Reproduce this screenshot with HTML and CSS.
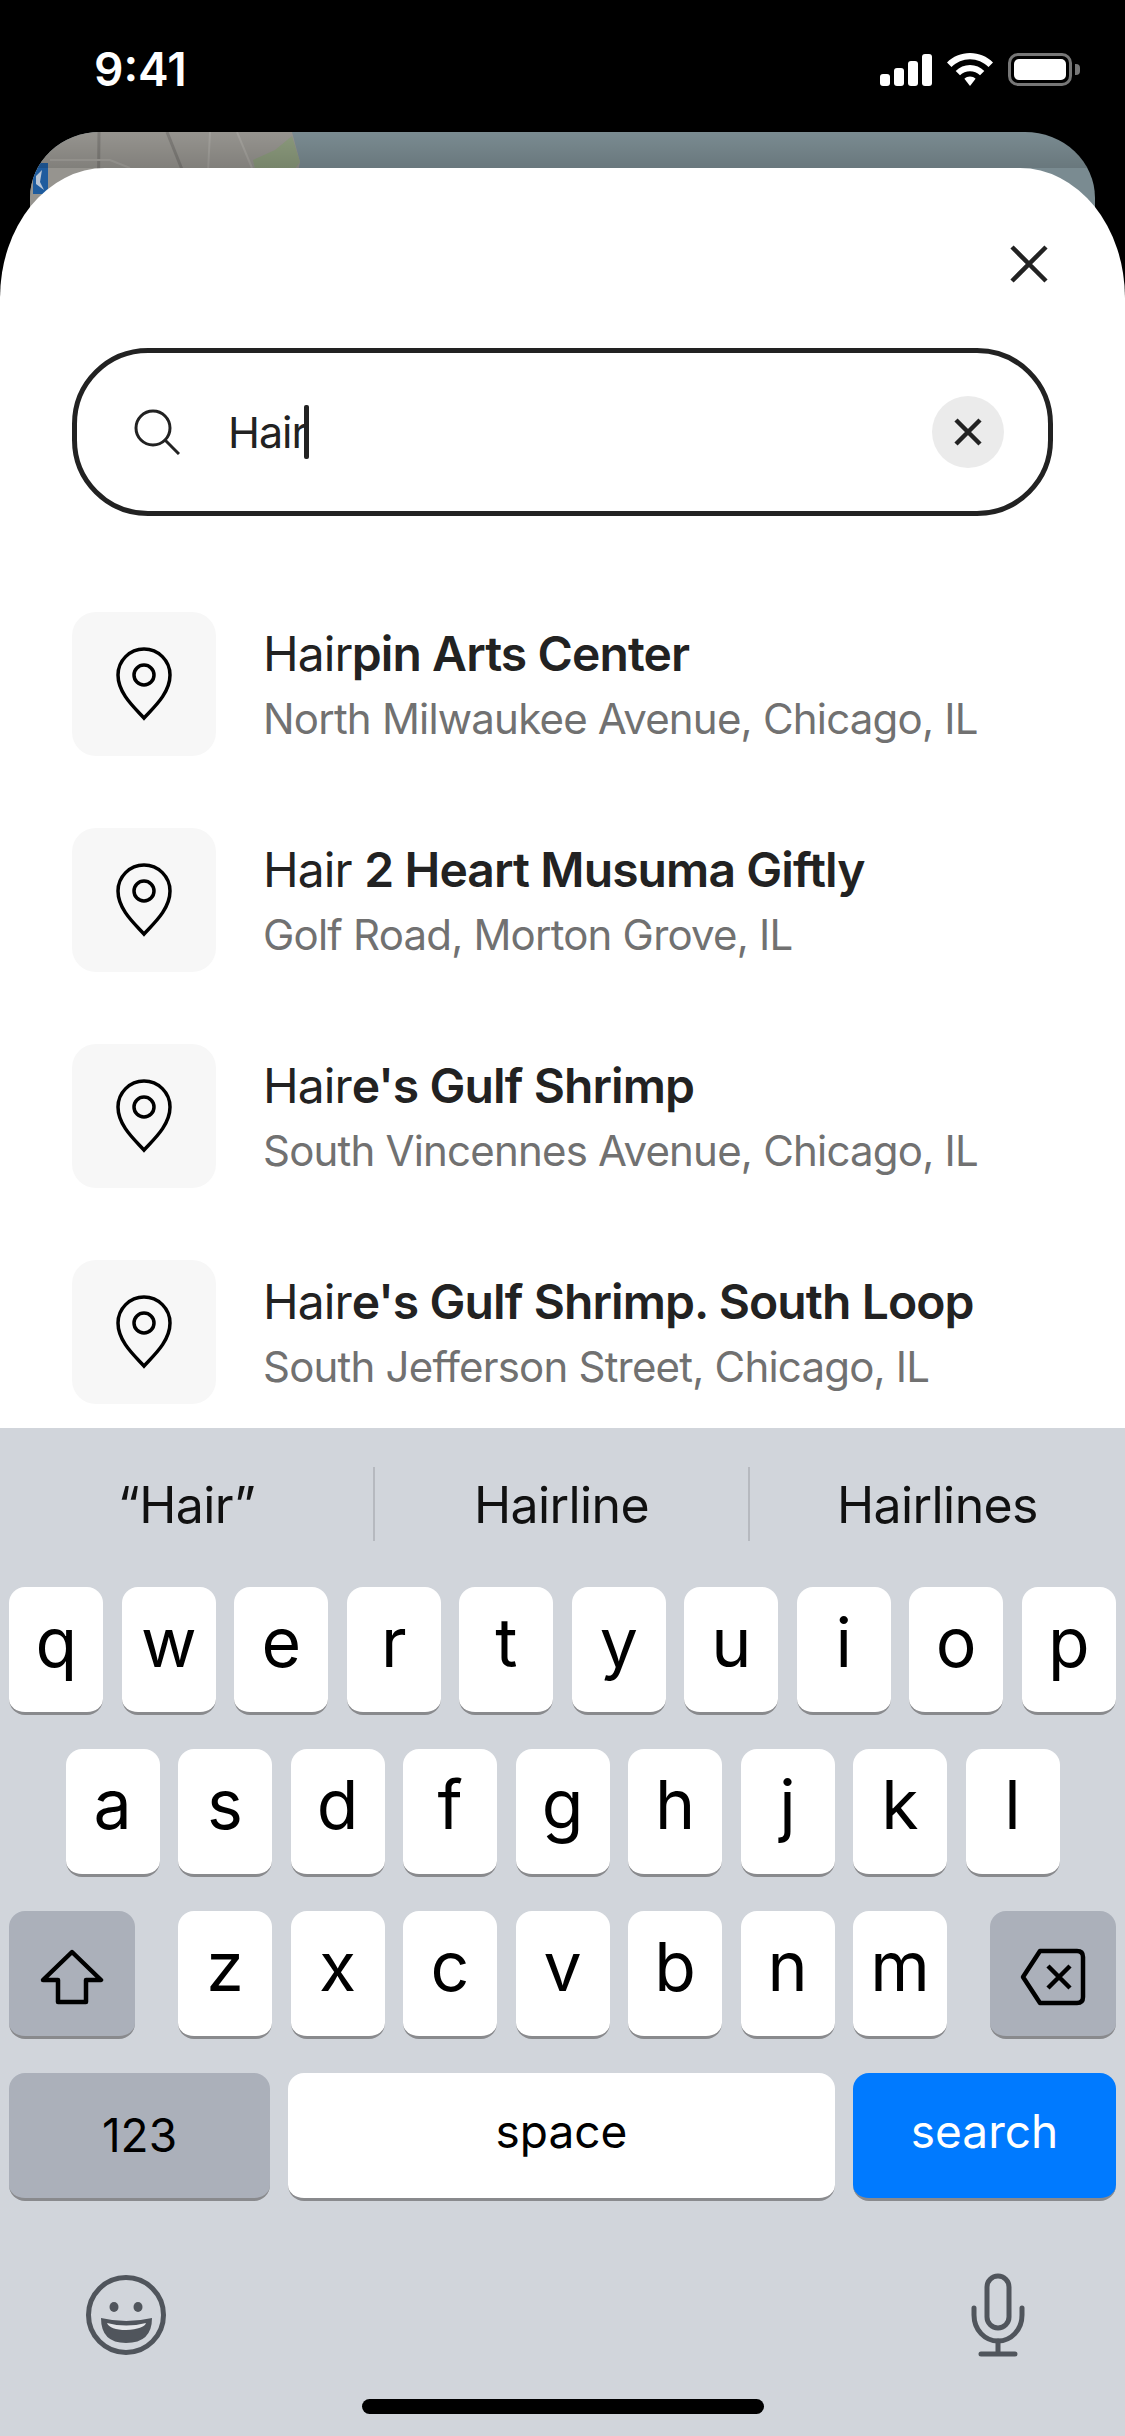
FILE: index.html
```html
<!DOCTYPE html>
<html lang="en">
<head>
    <meta charset="UTF-8">
    <meta name="viewport" content="width=device-width, initial-scale=1.0">
    <title>Search</title>
    <link rel="stylesheet" href="styles.css">
</head>
<body>
    <div class="status-bar">
        <span class="status-time">9:41</span>
        <div class="status-icons">
            <svg width="52" height="32" viewBox="0 0 52 32" fill="#fff">
                <rect x="0" y="20" width="10" height="12" rx="3"/>
                <rect x="14" y="14" width="10" height="18" rx="3"/>
                <rect x="28" y="7" width="10" height="25" rx="3"/>
                <rect x="42" y="0" width="10" height="32" rx="3"/>
            </svg>
            <svg width="46" height="33" viewBox="0 0 46 33" fill="#fff">
                <path d="M23 0C14 0 6 3.500 0 9.500L4.500 14C9.500 9.200 16 6.300 23 6.300S36.500 9.200 41.500 14L46 9.500C40 3.500 32 0 23 0Z"/>
                <path d="M23 12C17.500 12 12.500 14.200 8.700 18L13 22.300C15.700 19.700 19.200 18.200 23 18.200S30.300 19.700 33 22.300L37.300 18C33.500 14.200 28.500 12 23 12Z"/>
                <path d="M23 23.500C20.900 23.500 19 24.300 17.400 25.800L23 33L28.600 25.800C27 24.300 25.100 23.500 23 23.500Z"/>
            </svg>
            <div class="battery">
                <div class="battery-body"><div class="battery-fill"></div></div>
                <div class="battery-cap"></div>
            </div>
        </div>
    </div>

    <div class="map-card">
        <svg class="map-art" width="1065" height="100" viewBox="0 0 1065 100">
            <defs>
                <linearGradient id="map-shade" x1="0" y1="0" x2="0" y2="1">
                    <stop offset="0" stop-color="#000" stop-opacity="0"/>
                    <stop offset="1" stop-color="#000" stop-opacity="0.14"/>
                </linearGradient>
            </defs>
            <rect width="1065" height="100" fill="#7a8b91"/>
            <path d="M0 0H262L270 30L266 50L275 100H0Z" fill="#96948f"/>
            <path d="M223 28L245 18L262 4L270 30L264 38L275 100H220L228 50Z" fill="#8b9a7c"/>
            <path d="M69 0L68 100M137 0L153 40" stroke="#7f7d79" stroke-width="3" fill="none"/>
            <path d="M180 0L178 40M207 0L222 36M20 28H80L100 36" stroke="#a3a19c" stroke-width="2" fill="none"/>
            <path d="M3 31H18V62H3Z" fill="#1f5c9e"/>
            <path d="M6 44L12 38L10 50L14 58L6 52Z" fill="#b9c6d6"/>
            <rect width="1065" height="36" fill="url(#map-shade)"/>
        </svg>
    </div>

    <div class="sheet">
        <div class="sheet-top">
            <svg class="close-icon" width="38" height="38" viewBox="0 0 38 38" fill="none" stroke="#222" stroke-width="4.500">
                <path d="M2 2L36 36M36 2L2 36"/>
            </svg>
        </div>

        <div class="search-box">
            <svg class="search-icon" width="46" height="46" viewBox="0 0 46 46" fill="none" stroke="#222" stroke-width="3">
                <circle cx="19" cy="19" r="17"/>
                <path d="M31 31L45 45"/>
            </svg>
            <div class="search-text">Hair<span class="caret"></span></div>
            <div class="clear-btn">
                <svg width="28" height="28" viewBox="0 0 28 28" fill="none" stroke="#222" stroke-width="4.500">
                    <path d="M2 2L26 26M26 2L2 26"/>
                </svg>
            </div>
        </div>

        <div class="results">
            <div class="result-row">
                <div class="pin-box">
                    <svg width="56" height="74" viewBox="0 0 56 74" fill="none" stroke="#000" stroke-width="3.500">
                        <path d="M28 71C20 62 2 47 2 28A26 26 0 0 1 54 28C54 47 36 62 28 71Z"/>
                        <circle cx="28" cy="28" r="10"/>
                    </svg>
                </div>
                <div class="result-text">
                    <div class="result-title">Hair<b>pin Arts Center</b></div>
                    <div class="result-sub">North Milwaukee Avenue, Chicago, IL</div>
                </div>
            </div>
            <div class="result-row">
                <div class="pin-box">
                    <svg width="56" height="74" viewBox="0 0 56 74" fill="none" stroke="#000" stroke-width="3.500">
                        <path d="M28 71C20 62 2 47 2 28A26 26 0 0 1 54 28C54 47 36 62 28 71Z"/>
                        <circle cx="28" cy="28" r="10"/>
                    </svg>
                </div>
                <div class="result-text">
                    <div class="result-title">Hair <b>2 Heart Musuma Giftly</b></div>
                    <div class="result-sub">Golf Road, Morton Grove, IL</div>
                </div>
            </div>
            <div class="result-row">
                <div class="pin-box">
                    <svg width="56" height="74" viewBox="0 0 56 74" fill="none" stroke="#000" stroke-width="3.500">
                        <path d="M28 71C20 62 2 47 2 28A26 26 0 0 1 54 28C54 47 36 62 28 71Z"/>
                        <circle cx="28" cy="28" r="10"/>
                    </svg>
                </div>
                <div class="result-text">
                    <div class="result-title">Hair<b>e's Gulf Shrimp</b></div>
                    <div class="result-sub">South Vincennes Avenue, Chicago, IL</div>
                </div>
            </div>
            <div class="result-row">
                <div class="pin-box">
                    <svg width="56" height="74" viewBox="0 0 56 74" fill="none" stroke="#000" stroke-width="3.500">
                        <path d="M28 71C20 62 2 47 2 28A26 26 0 0 1 54 28C54 47 36 62 28 71Z"/>
                        <circle cx="28" cy="28" r="10"/>
                    </svg>
                </div>
                <div class="result-text">
                    <div class="result-title">Hair<b>e's Gulf Shrimp. South Loop</b></div>
                    <div class="result-sub">South Jefferson Street, Chicago, IL</div>
                </div>
            </div>
        </div>
    </div>

    <div class="keyboard">
        <div class="suggestions">
            <div class="suggestion">“Hair”</div>
            <div class="suggestion">Hairline</div>
            <div class="suggestion">Hairlines</div>
        </div>
        <div class="key-row">
            <div class="key">q</div><div class="key">w</div><div class="key">e</div><div class="key">r</div><div class="key">t</div>
            <div class="key">y</div><div class="key">u</div><div class="key">i</div><div class="key">o</div><div class="key">p</div>
        </div>
        <div class="key-row">
            <div class="key">a</div><div class="key">s</div><div class="key">d</div><div class="key">f</div><div class="key">g</div>
            <div class="key">h</div><div class="key">j</div><div class="key">k</div><div class="key">l</div>
        </div>
        <div class="key-row split">
            <div class="key key-action">
                <svg width="64" height="56" viewBox="0 0 64 56" fill="none" stroke="#000" stroke-width="4.500" stroke-linejoin="round">
                    <path d="M32 3L61 31H46V53H18V31H3Z"/>
                </svg>
            </div>
            <div class="letter-group">
                <div class="key">z</div><div class="key">x</div><div class="key">c</div><div class="key">v</div>
                <div class="key">b</div><div class="key">n</div><div class="key">m</div>
            </div>
            <div class="key key-action">
                <svg width="66" height="58" viewBox="0 0 66 58" fill="none" stroke="#000" stroke-width="4.500" stroke-linejoin="round">
                    <path d="M20 3H57Q63 3 63 9V49Q63 55 57 55H20L3 29Z"/>
                    <path d="M28 18L50 40M50 18L28 40"/>
                </svg>
            </div>
        </div>
        <div class="key-row bottom-row">
            <div class="key key-action key-123">123</div>
            <div class="key key-space">space</div>
            <div class="key key-search">search</div>
        </div>
        <div class="kb-tools">
            <svg width="80" height="80" viewBox="0 0 80 80">
                <circle cx="40" cy="40" r="37.500" fill="none" stroke="#50555c" stroke-width="5"/>
                <ellipse cx="28" cy="32" rx="4.500" ry="5" fill="#50555c"/>
                <ellipse cx="52" cy="32" rx="4.500" ry="5" fill="#50555c"/>
                <path d="M15 43Q40 49 66 43Q66 68 40 68Q15 68 15 43Z" fill="#50555c"/>
                <path d="M21 48Q40 53 60 48Q58 54 40 55Q24 55 21 48Z" fill="#e3e5e8"/>
            </svg>
            <svg width="58" height="86" viewBox="0 0 58 86" fill="none" stroke="#50555c" stroke-width="5" stroke-linecap="round">
                <rect x="18" y="4" width="22" height="52" rx="11"/>
                <path d="M5 36V43C5 58 16 69 29 69S53 58 53 43V36"/>
                <path d="M29 69V82M12 82H46"/>
            </svg>
        </div>
        <div class="home-indicator"></div>
    </div>
</body>
</html>
```

FILE: styles.css
```css
* {
    box-sizing: border-box;
}
body {
    margin: 0;
    width: 1125px;
    height: 2436px;
    background-color: #000;
    font-family: Inter, "Liberation Sans", sans-serif;
    overflow: hidden;
}
.status-bar {
    height: 132px;
    padding: 46px 45px 0 94px;
    display: flex;
    justify-content: space-between;
    align-items: flex-start;
}
.status-time {
    color: #fff;
    font-size: 46px;
    font-weight: 600;
    line-height: 46px;
}
.status-icons {
    display: flex;
    align-items: center;
    gap: 15px;
    padding-top: 7px;
}
.battery {
    display: flex;
    align-items: center;
    gap: 3px;
}
.battery-body {
    width: 64px;
    height: 33px;
    padding: 3px;
    border: 3px solid #777;
    border-radius: 10px;
}
.battery-fill {
    height: 100%;
    background-color: #fff;
    border-radius: 5px;
}
.battery-cap {
    width: 5px;
    height: 11px;
    background-color: #777;
    border-radius: 0 4px 4px 0;
}
.map-card {
    height: 100px;
    margin: 0 30px -64px;
    border-radius: 70px 70px 0 0 / 66px 66px 0 0;
    overflow: hidden;
}
.map-art {
    display: block;
}
.sheet {
    position: relative;
    height: 1260px;
    background-color: #fff;
    border-radius: 105px 105px 0 0 / 130px 130px 0 0;
    overflow: hidden;
    padding: 0 72px;
}
.sheet-top {
    height: 180px;
    display: flex;
    justify-content: flex-end;
    padding: 77px 5px 0 0;
}
.search-box {
    height: 168px;
    border: 5px solid #222;
    border-radius: 76px;
    display: flex;
    align-items: center;
    padding: 0 44px 0 57px;
}
.search-text {
    flex: 1;
    margin-left: 48px;
    font-size: 43px;
    letter-spacing: -1px;
    color: #222;
    display: flex;
    align-items: center;
}
.caret {
    width: 5px;
    height: 54px;
    margin-left: -3px;
    background-color: #222;
    border-radius: 2px;
}
.clear-btn {
    width: 72px;
    height: 72px;
    border-radius: 50%;
    background-color: #ebebeb;
    display: flex;
    justify-content: center;
    align-items: center;
}
.results {
    padding-top: 96px;
    display: flex;
    flex-direction: column;
    gap: 72px;
}
.result-row {
    display: flex;
    align-items: center;
    gap: 47px;
    height: 144px;
}
.pin-box {
    width: 144px;
    height: 144px;
    background-color: #f7f7f7;
    border-radius: 24px;
    display: flex;
    justify-content: center;
    align-items: center;
}
.result-title {
    font-size: 48px;
    line-height: 60px;
    letter-spacing: -0.900px;
    color: #222;
}
.result-title b {
    font-weight: 600;
}
.result-sub {
    font-size: 42px;
    line-height: 52px;
    margin-top: 9px;
    letter-spacing: -0.800px;
    color: #717171;
}
.keyboard {
    height: 1008px;
    background-color: #d1d5db;
    padding-top: 39px;
}
.suggestions {
    display: flex;
    height: 74px;
    margin-bottom: 46px;
}
.suggestion {
    width: 375px;
    padding-top: 2px;
    font-size: 50px;
    letter-spacing: -0.600px;
    color: #111;
    display: flex;
    justify-content: center;
    align-items: center;
    border-right: 2px solid #b6b9bf;
}
.suggestion:last-child {
    border-right: none;
}
.key-row {
    height: 128px;
    margin-bottom: 34px;
    padding: 0 9px;
    display: flex;
    justify-content: center;
    gap: 18.500px;
}
.key-row.split {
    justify-content: space-between;
    gap: 0;
}
.letter-group {
    display: flex;
    gap: 18.500px;
}
.key {
    width: 94px;
    height: 128px;
    background-color: #fff;
    border-radius: 16px;
    border-bottom: 3px solid #898a8d;
    color: #000;
    font-size: 68px;
    display: flex;
    justify-content: center;
    align-items: center;
    padding-bottom: 16px;
}
.key-action {
    width: 126px;
    background-color: #abb0ba;
    padding-top: 6px;
    padding-bottom: 0;
}
.bottom-row {
    justify-content: space-between;
    gap: 18px;
}
.key-123 {
    width: 261px;
    font-size: 46px;
    padding-top: 0;
    padding-bottom: 2px;
}
.key-space {
    width: 547px;
    font-size: 46px;
    padding-bottom: 10px;
}
.key-search {
    width: 263px;
    background-color: #007aff;
    color: #fff;
    font-size: 46px;
    padding-bottom: 10px;
}
.kb-tools {
    height: 86px;
    margin-top: 71px;
    padding: 0 98px 0 86px;
    display: flex;
    justify-content: space-between;
    align-items: center;
}
.home-indicator {
    width: 402px;
    height: 15px;
    margin: 41px auto 0;
    background-color: #000;
    border-radius: 8px;
}
```
